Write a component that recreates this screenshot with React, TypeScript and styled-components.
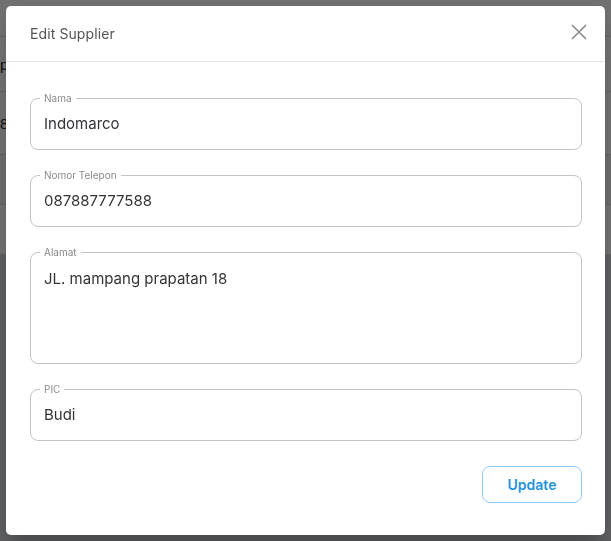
import React from "react";
import styled, { createGlobalStyle } from "styled-components";

const GlobalStyle = createGlobalStyle`
  html, body { margin: 0; padding: 0; }
  body {
    font-family: "Inter", "Noto Sans", sans-serif;
    background: #d4d6dc;
    width: 611px;
    height: 541px;
    overflow: hidden;
  }
  * { box-sizing: border-box; }
`;

/* ---------- page behind the dialog ---------- */
const Page = styled.div`
  width: 611px;
  height: 541px;
  display: flex;
  flex-direction: column;
  background: #d4d6dc;
`;

const TableCard = styled.div`
  background: #ffffff;
  display: flex;
  flex-direction: column;
`;

const TableHead = styled.div`
  height: 37px;
  background: #f8f8f8;
  border-bottom: 1px solid #d8d8d8;
`;

const TableRow = styled.div<{ $h: number; $tint?: boolean }>`
  height: ${(p) => p.$h}px;
  border-bottom: 1px solid #dcdcdc;
  background: ${(p) => (p.$tint ? "#f4f4f4" : "#ffffff")};
  display: flex;
  align-items: center;
  font-family: "Liberation Sans", sans-serif;
  font-size: 15px;
  color: #222;
  overflow: hidden;
`;

const Fragment = styled.span`
  white-space: nowrap;
`;

/* ---------- overlay + dialog ---------- */
const Overlay = styled.div`
  position: fixed;
  inset: 0;
  background: rgba(0, 0, 0, 0.55);
  display: flex;
  align-items: flex-start;
  justify-content: flex-start;
  padding: 6px;
`;

const Dialog = styled.div`
  width: 599px;
  height: 529px;
  background: #ffffff;
  border-radius: 5px;
  display: flex;
  flex-direction: column;
  box-shadow: 0 11px 15px -7px rgba(0, 0, 0, 0.2), 0 24px 38px 3px rgba(0, 0, 0, 0.14);
`;

const Header = styled.div`
  height: 56px;
  border-bottom: 1px solid #e2e2e2;
  display: flex;
  align-items: center;
  justify-content: space-between;
  padding: 0 15px 0 24px;
`;

const Title = styled.h2`
  margin: 0;
  font-size: 14px;
  font-weight: 400;
  color: #545454;
  letter-spacing: 0.1px;
`;

const CloseButton = styled.button`
  width: 22px;
  height: 22px;
  border: none;
  background: transparent;
  padding: 0;
  display: flex;
  align-items: center;
  justify-content: center;
  cursor: pointer;
  margin-top: -4px;
`;

const Body = styled.div`
  padding: 30px 23px 0 24px;
  display: flex;
  flex-direction: column;
  gap: 19px;
`;

const Field = styled.fieldset`
  margin: 0;
  padding: 0 13px;
  border: 1px solid #c4c4c4;
  border-radius: 8px;
  min-inline-size: 0;
  display: flex;
`;

const Legend = styled.legend`
  margin-left: -4px;
  padding: 0 4px;
  font-size: 10px;
  line-height: 12px;
  color: #8a8a8a;
`;

const Input = styled.input`
  border: none;
  outline: none;
  width: 100%;
  height: 45px;
  padding: 0 0 6px 0;
  font-family: inherit;
  font-size: 15px;
  color: #333338;
  background: transparent;
`;

const TextArea = styled.textarea`
  border: none;
  outline: none;
  width: 100%;
  height: 105px;
  resize: none;
  padding: 9px 0 0 0;
  font-family: inherit;
  font-size: 15px;
  line-height: 23px;
  color: #333338;
  background: transparent;
`;

const Footer = styled.div`
  display: flex;
  justify-content: flex-end;
  padding: 25px 23px 0 24px;
`;

const UpdateButton = styled.button`
  width: 100px;
  height: 37px;
  border: 1px solid #8ecbf3;
  border-radius: 8px;
  background: #ffffff;
  color: #1f93de;
  font-family: inherit;
  font-size: 14px;
  font-weight: 600;
  cursor: pointer;
`;

const CloseIcon = () => (
  <svg width="16" height="16" viewBox="0 0 16 16" fill="none">
    <path d="M1.5 1.5 L14.5 14.5 M14.5 1.5 L1.5 14.5" stroke="#8c8c8c" strokeWidth="1.7" strokeLinecap="round" />
  </svg>
);

export default function App() {
  return (
    <>
      <GlobalStyle />
      <Page>
        <TableCard>
          <TableHead />
          <TableRow $h={55}>
            <Fragment>p</Fragment>
          </TableRow>
          <TableRow $h={63}>
            <Fragment>87</Fragment>
          </TableRow>
          <TableRow $h={50} $tint />
          <TableRow $h={50} />
        </TableCard>
      </Page>
      <Overlay>
        <Dialog role="dialog" aria-label="Edit Supplier">
          <Header>
            <Title>Edit Supplier</Title>
            <CloseButton aria-label="close">
              <CloseIcon />
            </CloseButton>
          </Header>
          <Body>
            <Field>
              <Legend>Nama</Legend>
              <Input defaultValue="Indomarco" />
            </Field>
            <Field>
              <Legend>Nomor Telepon</Legend>
              <Input defaultValue="087887777588" />
            </Field>
            <Field>
              <Legend>Alamat</Legend>
              <TextArea defaultValue="JL. mampang prapatan 18" />
            </Field>
            <Field>
              <Legend>PIC</Legend>
              <Input defaultValue="Budi" />
            </Field>
          </Body>
          <Footer>
            <UpdateButton>Update</UpdateButton>
          </Footer>
        </Dialog>
      </Overlay>
    </>
  );
}
